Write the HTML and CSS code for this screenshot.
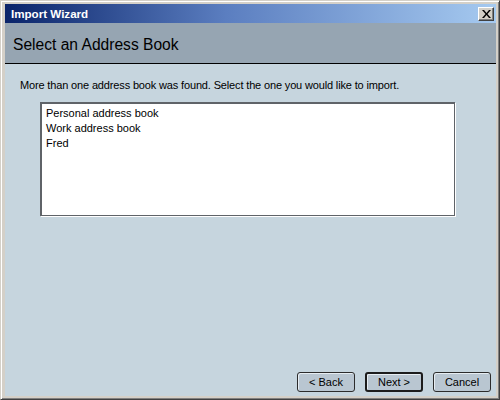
FILE: index.html
```html
<!DOCTYPE html>
<html>
<head>
<meta charset="utf-8">
<link rel="stylesheet" href="styles.css">
</head>
<body>
<div class="window">
  <div class="titlebar">
    <span class="title">Import Wizard</span>
    <span class="close">
      <svg width="9" height="8" viewBox="0 0 9 8"><path d="M0 0h2l2.5 3 2.5-3h2L5.5 4 9 8H7L4.5 5 2 8H0l3.5-4z" fill="#000"/></svg>
    </span>
  </div>
  <div class="header">Select an Address Book</div>
  <div class="content">
    <p class="intro">More than one address book was found. Select the one you would like to import.</p>
    <div class="listbox">
      <div class="item">Personal address book</div>
      <div class="item">Work address book</div>
      <div class="item">Fred</div>
    </div>
    <div class="buttons">
      <button class="btn">&lt; Back</button>
      <button class="btn default">Next &gt;</button>
      <button class="btn">Cancel</button>
    </div>
  </div>
</div>
</body>
</html>
```
FILE: styles.css
```css
html, body {
  margin: 0;
  padding: 0;
}
body {
  width: 500px;
  height: 400px;
  overflow: hidden;
  font-family: "Liberation Sans", Arial, sans-serif;
  font-size: 11px;
}
.window {
  box-sizing: border-box;
  width: 500px;
  height: 400px;
  display: flex;
  flex-direction: column;
  background: #d4d0c8;
  border-top: 1px solid #d4d0c8;
  border-left: 1px solid #d4d0c8;
  border-right: 1px solid #404040;
  border-bottom: 1px solid #404040;
  box-shadow: inset 1px 1px 0 #ffffff, inset -1px -1px 0 #808080;
  padding: 3px 3px 3px 4px;
}
.titlebar {
  height: 19px;
  flex: none;
  display: flex;
  align-items: center;
  justify-content: space-between;
  background: linear-gradient(to right, #0a246a 0%, #5b7ec0 45%, #a6caf0 100%);
  padding: 0 2px 0 6px;
}
.title {
  color: #fff;
  font-family: "Liberation Sans", Arial, sans-serif;
  font-weight: bold;
  font-size: 11.6px;
}
.close {
  box-sizing: border-box;
  width: 16px;
  height: 14px;
  display: flex;
  align-items: center;
  justify-content: center;
  background: #d4d0c8;
  border-top: 1px solid #fff;
  border-left: 1px solid #fff;
  border-right: 1px solid #404040;
  border-bottom: 1px solid #404040;
  box-shadow: inset -1px -1px 0 #808080;
}
.header {
  flex: none;
  height: 41px;
  box-sizing: border-box;
  background: #96a5b2;
  border-bottom: 1px solid #000;
  font-family: "Liberation Sans", Arial, sans-serif;
  font-size: 15.6px;
  color: #000;
  padding: 13px 0 0 8px;
}
.content {
  flex: 1;
  background: #c6d5de;
  display: flex;
  flex-direction: column;
  padding: 0 5px 4px 15px;
}
.intro {
  margin: 15px 0 0 0;
  font-size: 11px;
  letter-spacing: -0.15px;
  color: #000;
  line-height: 13px;
}
.listbox {
  box-sizing: border-box;
  margin: 10px 0 0 20px;
  width: 415px;
  height: 114px;
  background: #fff;
  border: 1px solid #5f6368;
  border-width: 2px 1px 1px 2px;
  box-shadow: 1px 1px 0 #fff;
  padding: 2px 4px;
}
.item {
  height: 15px;
  line-height: 15px;
  font-size: 11px;
  color: #000;
}
.buttons {
  margin-top: auto;
  display: flex;
  justify-content: flex-end;
  gap: 10px;
}
.btn {
  box-sizing: border-box;
  width: 58px;
  height: 20px;
  font-family: "Liberation Sans", Arial, sans-serif;
  font-size: 11px;
  color: #000;
  background: #b9c6d1;
  border: 1px solid #2c2c2c;
  border-radius: 3px;
  box-shadow: inset 1px 1px 0 #e6edf2;
  padding: 0;
}
.btn.default {
  border: 2px solid #1c1c1c;
}
```
